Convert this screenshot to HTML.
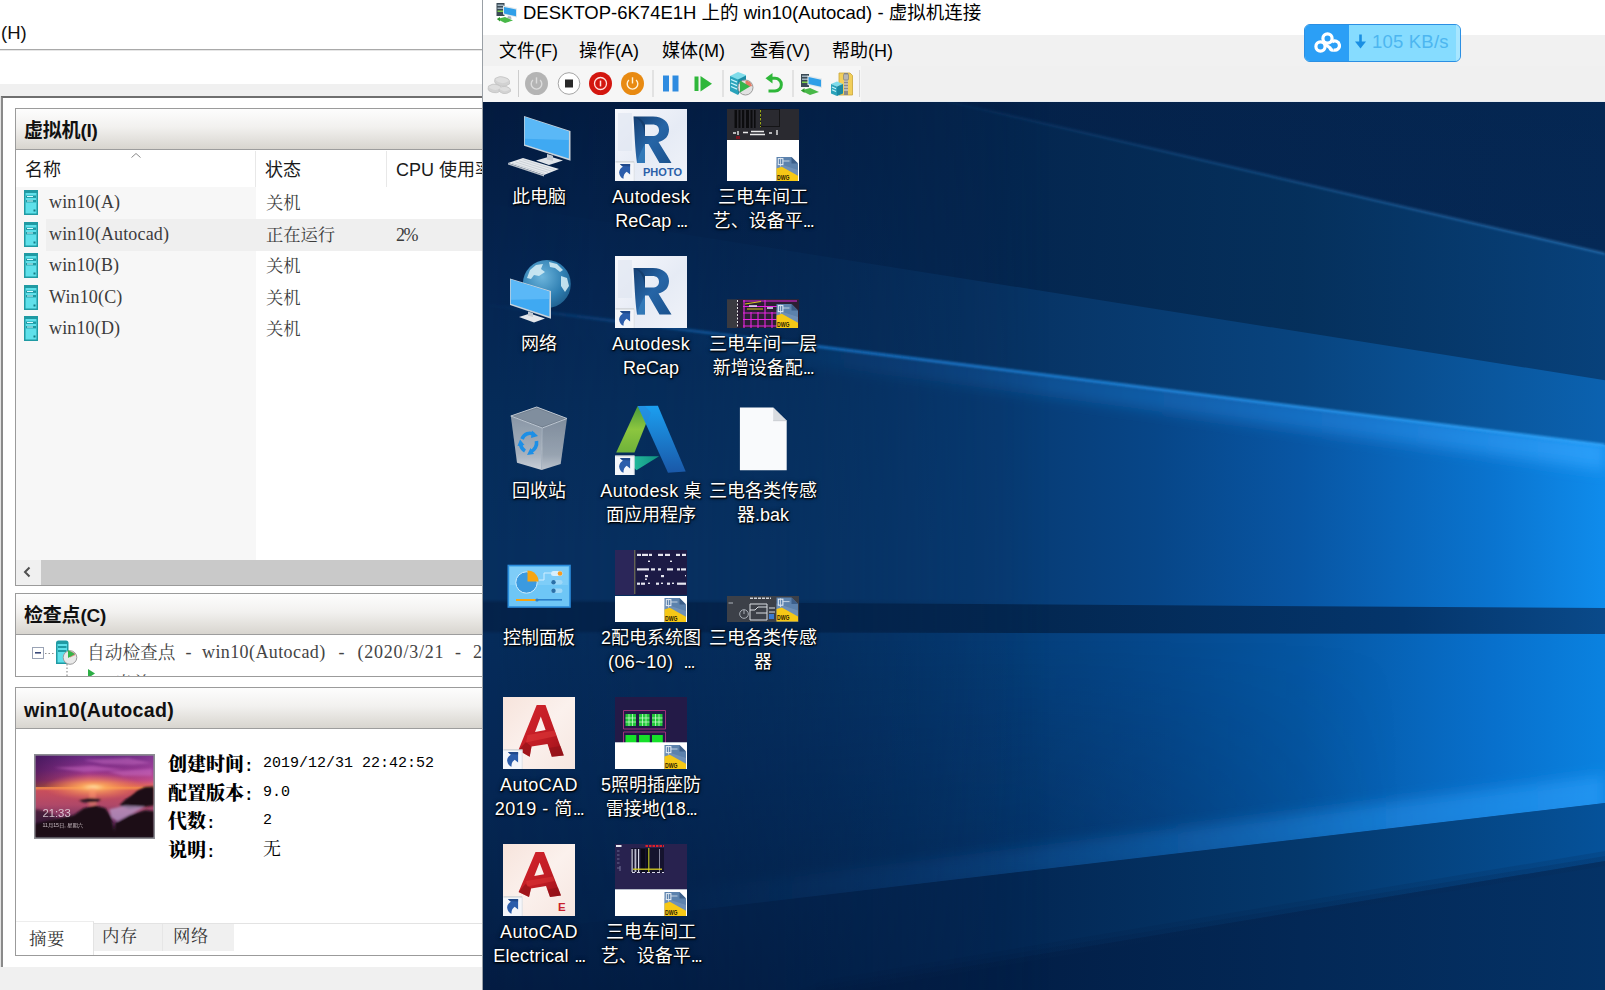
<!DOCTYPE html>
<html lang="zh-CN">
<head>
<meta charset="utf-8">
<title>Hyper-V</title>
<style>
*{box-sizing:border-box;margin:0;padding:0}
html,body{width:1605px;height:990px;overflow:hidden;background:#f0f0f0}
body{position:relative;font-family:"Liberation Sans","Noto Sans CJK SC",sans-serif;color:#000}
.abs{position:absolute}
/* ---------- left: Hyper-V manager ---------- */
#mgr{position:absolute;left:0;top:0;width:483px;height:990px;background:#f0f0f0;overflow:hidden}
#mgr .top1{position:absolute;left:0;top:0;width:483px;height:49px;background:#fff}
#mgr .top1 span{position:absolute;left:1px;top:21px;font-size:18.5px;line-height:24px;color:#111}
#mgr .hr{position:absolute;left:0;top:49px;width:483px;height:1px;background:#a9a9a9}
#mgr .hr2{position:absolute;left:0;top:50px;width:483px;height:1px;background:#e6e6e6}
#mgr .top2{position:absolute;left:0;top:51px;width:483px;height:33px;background:#fff}
#frame{position:absolute;left:0;top:96px;width:490px;height:871px;background:#fff;border-top:2px solid #6f6f6f;border-left:3px solid #8a8a8a;}
#frame:before{content:"";position:absolute;left:-3px;top:-2px;width:1px;height:871px;background:#e3e3e3}
.panel{position:absolute;left:15px;width:480px;border:1px solid #9b9b9b;background:#fff;overflow:hidden}
.phead{position:absolute;left:0;top:0;width:100%;height:41px;background:linear-gradient(#fdfdfd 0%,#f2f1ef 45%,#d8d5cf 100%);border-bottom:1px solid #9d9d9d}
.phead b{position:absolute;left:8px;top:9.5px;font-size:19px;line-height:24px;font-weight:bold;color:#111;letter-spacing:-0.2px}
.sim{font-family:"Liberation Mono","Noto Serif CJK SC",serif}
.colh{position:absolute;top:42px;height:36px;font-size:18px;line-height:24px;color:#1a1a1a}
.colh span{position:absolute;top:7px;white-space:nowrap}
.row{position:absolute;left:0;width:480px;height:32px;font-size:17.3px;line-height:22px;color:#3c3c3c}
.row span{position:absolute;top:4px;white-space:nowrap}
.row .nm{left:33px;font-size:18px;letter-spacing:0.15px;top:4px;font-family:"Liberation Serif","Noto Serif CJK SC",serif}
.row .st{left:250px;font-family:"Noto Serif CJK SC",serif}
.row .cpu{left:380px;font-size:18px;letter-spacing:-1.5px;top:5.5px;font-family:"Liberation Serif","Noto Serif CJK SC",serif}
.vmi{position:absolute;left:8px;top:3px;width:14px;height:25px}
/* ---------- right: VM connection window ---------- */
#vm{position:absolute;left:482px;top:0;width:1123px;height:990px;background:#f0f0f0;border-left:1px solid #9aa0a6;overflow:hidden}
#title{position:absolute;left:0;top:0;width:1122px;height:35px;background:#fff}
#title .t{position:absolute;left:40px;top:0;font-size:18.5px;line-height:26px;white-space:nowrap;color:#000}
#menu{position:absolute;left:0;top:35px;width:1122px;height:31px;background:#f1f1f1;font-size:18px}
#menu span{position:absolute;top:3px;line-height:26px;white-space:nowrap;font-size:18px}
#tb{position:absolute;left:0;top:66px;width:1122px;height:36px;background:#f0f0f0;border-bottom:1px solid #e6ecf2}
#tb .band{position:absolute;left:0;top:0;width:378px;height:36px;background:#f6f6f6}
#tb .sep{position:absolute;top:4px;width:1px;height:27px;background:#c9c9c9}
#desk{position:absolute;left:0;top:102px;width:1122px;height:888px;background:#04204a;overflow:hidden}
.lbl{position:absolute;width:140px;text-align:center;color:#fff;font-size:18px;line-height:24px;white-space:nowrap;text-shadow:0 1px 2px rgba(0,0,0,.95),1px 1px 1px rgba(0,0,0,.8),0 0 4px rgba(0,0,0,.7)}
.lbl .la{letter-spacing:.4px}
.lbl .el{letter-spacing:-1.5px}
</style>
</head>
<body>
<!--LEFT-->
<div id="mgr">
  <div class="top1"><span>(H)</span></div>
  <div class="hr"></div><div class="hr2"></div>
  <div class="top2"></div>
  <div id="frame"></div>
<!--P1-->
<div class="panel" style="top:108px;height:478px">
  <div class="abs" style="left:0;top:78px;width:240px;height:373px;background:#f7f7f7"></div>
  <div class="phead"><b>虚拟机(I)</b></div>
  <div class="colh" style="left:0;width:240px;border-right:1px solid #e8e8e8"><span style="left:9px">名称</span><svg class="abs" style="left:114px;top:1px" width="12" height="7" viewBox="0 0 12 7"><path d="M1.5 5.5 L6 1.5 L10.5 5.5" fill="none" stroke="#8a8a8a" stroke-width="1"/></svg></div>
  <div class="colh" style="left:241px;width:130px;border-right:1px solid #e8e8e8"><span style="left:8px">状态</span></div>
  <div class="colh" style="left:372px;width:120px"><span style="left:8px">CPU 使用率</span></div>
  <div class="row" style="top:78.0px"><svg class="vmi" viewBox="0 0 14 25"><rect x="0" y="0" width="14" height="25" fill="#1f9aa3"/><rect x="1.5" y="3" width="11" height="20.5" fill="#5fe0ea"/><rect x="2" y="5.5" width="10" height="2.4" fill="#1f9aa3"/><rect x="2" y="10" width="10" height="2.4" fill="#1f9aa3"/><rect x="3" y="6" width="6" height="1" fill="#d8fbff"/><rect x="3" y="10.5" width="6" height="1" fill="#d8fbff"/><rect x="9.5" y="19.5" width="2" height="2" fill="#157b84"/></svg><span class="nm sim">win10(A)</span><span class="st">关机</span></div><div class="row" style="top:109.5px"><div class="abs" style="left:30px;top:0;width:460px;height:32px;background:#efefef"></div><svg class="vmi" viewBox="0 0 14 25"><rect x="0" y="0" width="14" height="25" fill="#1f9aa3"/><rect x="1.5" y="3" width="11" height="20.5" fill="#5fe0ea"/><rect x="2" y="5.5" width="10" height="2.4" fill="#1f9aa3"/><rect x="2" y="10" width="10" height="2.4" fill="#1f9aa3"/><rect x="3" y="6" width="6" height="1" fill="#d8fbff"/><rect x="3" y="10.5" width="6" height="1" fill="#d8fbff"/><rect x="9.5" y="19.5" width="2" height="2" fill="#157b84"/></svg><span class="nm sim">win10(Autocad)</span><span class="st">正在运行</span><span class="cpu sim">2%</span></div><div class="row" style="top:141.0px"><svg class="vmi" viewBox="0 0 14 25"><rect x="0" y="0" width="14" height="25" fill="#1f9aa3"/><rect x="1.5" y="3" width="11" height="20.5" fill="#5fe0ea"/><rect x="2" y="5.5" width="10" height="2.4" fill="#1f9aa3"/><rect x="2" y="10" width="10" height="2.4" fill="#1f9aa3"/><rect x="3" y="6" width="6" height="1" fill="#d8fbff"/><rect x="3" y="10.5" width="6" height="1" fill="#d8fbff"/><rect x="9.5" y="19.5" width="2" height="2" fill="#157b84"/></svg><span class="nm sim">win10(B)</span><span class="st">关机</span></div><div class="row" style="top:172.5px"><svg class="vmi" viewBox="0 0 14 25"><rect x="0" y="0" width="14" height="25" fill="#1f9aa3"/><rect x="1.5" y="3" width="11" height="20.5" fill="#5fe0ea"/><rect x="2" y="5.5" width="10" height="2.4" fill="#1f9aa3"/><rect x="2" y="10" width="10" height="2.4" fill="#1f9aa3"/><rect x="3" y="6" width="6" height="1" fill="#d8fbff"/><rect x="3" y="10.5" width="6" height="1" fill="#d8fbff"/><rect x="9.5" y="19.5" width="2" height="2" fill="#157b84"/></svg><span class="nm sim">Win10(C)</span><span class="st">关机</span></div><div class="row" style="top:204.0px"><svg class="vmi" viewBox="0 0 14 25"><rect x="0" y="0" width="14" height="25" fill="#1f9aa3"/><rect x="1.5" y="3" width="11" height="20.5" fill="#5fe0ea"/><rect x="2" y="5.5" width="10" height="2.4" fill="#1f9aa3"/><rect x="2" y="10" width="10" height="2.4" fill="#1f9aa3"/><rect x="3" y="6" width="6" height="1" fill="#d8fbff"/><rect x="3" y="10.5" width="6" height="1" fill="#d8fbff"/><rect x="9.5" y="19.5" width="2" height="2" fill="#157b84"/></svg><span class="nm sim">win10(D)</span><span class="st">关机</span></div>
  <div class="abs" style="left:0;top:451px;width:480px;height:25px;background:#c9c9c9"><div class="abs" style="left:0;top:0;width:25px;height:25px;background:#f0f0f0"><svg class="abs" style="left:7px;top:6px" width="8" height="12" viewBox="0 0 8 12"><path d="M6.5 1.5 L2 6 L6.5 10.5" fill="none" stroke="#505050" stroke-width="2"/></svg></div></div>
</div>
<!--P2-->
<div class="panel" style="top:593px;height:84px">
  <div class="phead"><b>检查点(C)</b></div>
  <svg class="abs" style="left:16px;top:53px" width="26" height="32" viewBox="0 0 26 32"><rect x=".5" y=".5" width="11" height="11" fill="#fff" stroke="#9aa3b5"/><rect x="3" y="5" width="6" height="1.6" fill="#3a4a7a"/><path d="M13 6.5 H23" stroke="#909090" stroke-dasharray="1.5 2" stroke-width="1.2"/></svg>
  <svg class="abs" style="left:39px;top:46px" width="23" height="26" viewBox="0 0 23 26"><path d="M1 3 Q1 0.5 3.5 0.5 L11 0.5 Q13.5 0.5 13.5 3 L13.5 24 L1 24 Z" fill="#1f9aa3"/><rect x="2.5" y="4" width="9.5" height="18.5" fill="#5fe0ea"/><rect x="3" y="6" width="8.5" height="2" fill="#1f9aa3"/><rect x="3" y="10" width="8.5" height="2" fill="#1f9aa3"/><circle cx="15" cy="17.5" r="6.8" fill="#e9e9e9" stroke="#9a9a9a" stroke-width="1"/><path d="M15 17.5 L15 11.5 A6 6 0 0 1 20.5 15 Z" fill="#d64a3a" opacity=".6"/><path d="M13 10 L20 14 L13 18 Z" fill="#35b54a"/></svg>
    <div class="abs" style="left:52px;top:31px;width:2px;height:20px"></div>
  <svg class="abs" style="left:49px;top:70px" width="4" height="14" viewBox="0 0 4 14"><path d="M2 0 V14" stroke="#909090" stroke-dasharray="1.5 2" stroke-width="1.2"/></svg>
  <div class="abs" style="left:0;top:46px;height:24px;width:480px;font-size:18px;line-height:24px;color:#444;white-space:nowrap;font-family:'Liberation Serif','Noto Serif CJK SC',serif"><span class="abs" style="left:71px;font-family:'Noto Serif CJK SC',serif;font-size:17.7px">自动检查点</span><span class="abs" style="left:169.5px">-</span><span class="abs" style="left:186px;letter-spacing:.4px">win10(Autocad)</span><span class="abs" style="left:322.6px">-</span><span class="abs" style="left:341.4px;letter-spacing:.8px">(2020/3/21</span><span class="abs" style="left:439px">-</span><span class="abs" style="left:457px">2</span></div>
  <svg class="abs" style="left:72px;top:75px" width="8" height="10" viewBox="0 0 8 10"><path d="M0 0 L7 4.5 L0 9 Z" fill="#2cae45"/></svg>
  <div class="abs" style="left:99px;top:77px;font-size:17.4px;line-height:22px;color:#444;font-family:'Noto Serif CJK SC',serif;white-space:nowrap">当前</div>
</div>
<!--P3-->
<div class="panel" style="top:687px;height:269px">
  <div class="phead"><b style="font-size:19.6px;letter-spacing:0.3px">win10(Autocad)</b></div>
  <svg class="abs" style="left:18px;top:66px" width="121" height="85" viewBox="0 0 122 86" preserveAspectRatio="none">
<defs><linearGradient id="sk" x1="0" y1="0" x2="0" y2="1"><stop offset="0" stop-color="#6a2a84"/><stop offset=".18" stop-color="#93348e"/><stop offset=".3" stop-color="#c0447a"/><stop offset=".365" stop-color="#e8684a"/><stop offset=".395" stop-color="#f08a4a"/><stop offset=".43" stop-color="#c84e5c"/><stop offset=".6" stop-color="#b04868"/><stop offset=".8" stop-color="#6a3060"/><stop offset="1" stop-color="#2a1428"/></linearGradient>
<linearGradient id="skl" x1="0" y1="0" x2="1" y2="0"><stop offset="0" stop-color="#2a0a40" stop-opacity=".55"/><stop offset=".45" stop-color="#2a0a40" stop-opacity="0"/><stop offset="1" stop-color="#d060c0" stop-opacity=".25"/></linearGradient>
<radialGradient id="sn" cx=".49" cy=".38" r=".42" gradientTransform="translate(0 .24) scale(1 .38)"><stop offset="0" stop-color="#ffe8a8"/><stop offset=".25" stop-color="#ffb060" stop-opacity=".8"/><stop offset="1" stop-color="#ff8050" stop-opacity="0"/></radialGradient>
<filter id="tb2" x="-10%" y="-10%" width="120%" height="120%"><feGaussianBlur stdDeviation="1.1"/></filter>
<clipPath id="tc"><rect x="1.5" y="1.5" width="119" height="83"/></clipPath></defs>
<rect x="0" y="0" width="122" height="86" fill="#8c8c92"/>
<g clip-path="url(#tc)">
<rect x="1.5" y="1.5" width="119" height="83" fill="url(#sk)"/>
<rect x="1.5" y="1.5" width="119" height="32" fill="url(#skl)"/>
<g filter="url(#tb2)"><path d="M50 6 L95 4 L118 9 L100 11 L70 10 Z M20 14 L60 12 L90 16 L50 18 Z M75 18 L119 15 L119 22 L90 22 Z" fill="#d070c8" opacity=".45"/>
<rect x="1.5" y="1.5" width="119" height="83" fill="url(#sn)"/>
<path d="M56 34 L62 34 L63 52 L55 52 Z" fill="#ff9a70" opacity=".45"/>
<path d="M121 33 L112 33.5 L104 37 L98 42 L92 46 L86 52 L96 56 L121 52 Z" fill="#1e1018"/>
<path d="M45 46.5 L56 44.5 L68 45.5 L64 48.5 L50 49 Z" fill="#2a1424"/>
<path d="M76 56 L92 52 L112 53 L100 60 L84 68 L78 64 Z" fill="#b89ac8" opacity=".75"/>
<path d="M1 70 L20 66 L40 62 L50 55 L62 52 L72 55 L78 64 L82 84.5 L1 84.5 Z" fill="#1a0e16"/>
<path d="M82 70 L96 62 L112 57 L121 58 L121 84.5 L80 84.5 Z" fill="#1c1018"/>
<path d="M1 56 L12 58 L24 64 L1 72 Z" fill="#2a1426" opacity=".7"/></g>
<text x="8.5" y="64" font-family="Liberation Sans, sans-serif" font-size="11" fill="#f0e4ea" opacity=".8" textLength="28.5" lengthAdjust="spacingAndGlyphs">21:33</text>
<text x="8.5" y="73.5" font-family="Liberation Sans, Noto Sans CJK SC, sans-serif" font-size="4.6" fill="#f0e4ea" opacity=".8" textLength="41" lengthAdjust="spacingAndGlyphs">11月15日, 星期六</text>
</g></svg>
  <div class="abs" style="left:152px;top:63.0px;font-size:19px;line-height:24px;font-weight:900;font-family:'Noto Serif CJK SC',serif;white-space:nowrap;color:#000">创建时间<span style="font-weight:700;font-family:'Liberation Mono',monospace;font-size:16px">:</span></div><div class="abs" style="left:247px;top:64.0px;font-size:15px;letter-spacing:0px;line-height:24px;font-family:'Liberation Mono','Noto Serif CJK SC',monospace;white-space:nowrap;color:#000">2019/12/31 22:42:52</div>
  <div class="abs" style="left:152px;top:91.7px;font-size:19px;line-height:24px;font-weight:900;font-family:'Noto Serif CJK SC',serif;white-space:nowrap;color:#000">配置版本<span style="font-weight:700;font-family:'Liberation Mono',monospace;font-size:16px">:</span></div><div class="abs" style="left:247px;top:92.7px;font-size:15px;letter-spacing:0px;line-height:24px;font-family:'Liberation Mono','Noto Serif CJK SC',monospace;white-space:nowrap;color:#000">9.0</div>
  <div class="abs" style="left:152px;top:120.4px;font-size:19px;line-height:24px;font-weight:900;font-family:'Noto Serif CJK SC',serif;white-space:nowrap;color:#000">代数<span style="font-weight:700;font-family:'Liberation Mono',monospace;font-size:16px">:</span></div><div class="abs" style="left:247px;top:121.4px;font-size:15px;letter-spacing:0px;line-height:24px;font-family:'Liberation Mono','Noto Serif CJK SC',monospace;white-space:nowrap;color:#000">2</div>
  <div class="abs" style="left:152px;top:149.1px;font-size:19px;line-height:24px;font-weight:900;font-family:'Noto Serif CJK SC',serif;white-space:nowrap;color:#000">说明<span style="font-weight:700;font-family:'Liberation Mono',monospace;font-size:16px">:</span></div><div class="abs" style="left:247px;top:150.1px;font-size:15px;letter-spacing:0px;line-height:24px;font-family:'Liberation Mono','Noto Serif CJK SC',monospace;white-space:nowrap;color:#000"><span style="font-size:18px">无</span></div>
  <div class="abs" style="left:0;top:235px;width:480px;height:1px;background:#e3e3e3"></div>
  <div class="abs" style="left:78px;top:236px;width:140px;height:27px;background:#f0f0f0"></div>
  <div class="abs" style="left:146px;top:236px;width:1px;height:27px;background:#e6e6e6"></div>
  <div class="abs" style="left:0;top:233px;width:78px;height:34px;background:#fff;border-right:1px solid #e3e3e3;border-top:1px solid #ededed"></div>
  <div class="abs" style="left:13px;top:239px;font-size:17.4px;line-height:22px;color:#333;font-family:'Noto Serif CJK SC',serif;letter-spacing:0.5px">摘要</div>
  <div class="abs" style="left:86px;top:236px;font-size:17.4px;line-height:22px;color:#333;font-family:'Noto Serif CJK SC',serif;letter-spacing:0.5px">内存</div>
  <div class="abs" style="left:157px;top:236px;font-size:17.4px;line-height:22px;color:#333;font-family:'Noto Serif CJK SC',serif;letter-spacing:0.5px">网络</div>
</div>
<!--/P-->
</div>
<!--RIGHT-->
<div id="vm">
  <div id="title"><svg class="abs" style="left:13px;top:2px" width="22" height="22" viewBox="0 0 22 22">
<rect x="0.5" y="1" width="8" height="13" fill="#3a4a55"/><rect x="1.5" y="2.5" width="6" height="1.5" fill="#9fb3c0"/><rect x="1.5" y="5.5" width="6" height="1.5" fill="#9fb3c0"/><rect x="1.5" y="8.5" width="6" height="1.5" fill="#7fd24a"/>
<path d="M7 3.5 L21 6.5 L21 15.5 L7 12.5 Z" fill="#dfe7ec"/><path d="M8 5 L20 7.6 L20 14.2 L8 11.6 Z" fill="#2f9fe8"/>
<path d="M12 14 L15 14.6 L15.5 17 L11 16.5 Z" fill="#aab4ba"/>
<path d="M1 17 L9 15 L17 18.5 L9 21 Z" fill="#48b848"/><path d="M1 17 L4 15 L4 19.5 Z" fill="#2e9a2e"/>
</svg><div class="t">DESKTOP-6K74E1H 上的 win10(Autocad) - 虚拟机连接</div></div>
  <div id="menu"><span style="left:16px">文件(F)</span><span style="left:96px">操作(A)</span><span style="left:179px">媒体(M)</span><span style="left:267px">查看(V)</span><span style="left:349px">帮助(H)</span></div>
  <div id="tb"><div class="band"></div><svg class="abs" style="left:0;top:0" width="380" height="36" viewBox="0 0 380 36">
<defs><linearGradient id="tg1" x1="0" y1="0" x2="0" y2="1"><stop offset="0" stop-color="#b9edf5"/><stop offset="1" stop-color="#3bb6cc"/></linearGradient></defs>
<!-- ctrl-alt-del (disabled keys) -->
<g fill="#d2d2d2" stroke="#c2c2c2" stroke-width=".7"><path d="M12 12.5 Q16.5 9.5 20.5 11 Q26.5 12.5 26.5 15 L26.5 18 Q22 21.5 17.5 20 Q11.5 18 11.5 15.5 Z"/><path d="M5.5 20 Q10 17 14 18.5 Q18.5 20 18.5 22 L18.5 24.5 Q14 28 9.5 26.5 Q5 25 5 23 Z"/><path d="M16 22 Q20 19.5 23.5 20.5 Q27.5 22 27.5 23.5 L27.5 25.5 Q23.5 28.5 20 27.5 Q16 26 16 24.5 Z"/></g><g fill="#dedede"><path d="M12.5 13 Q16.5 10.3 20.3 11.7 Q25.8 13.2 25.8 15 Q21.5 18 17.7 16.8 Q12.3 15.2 12.5 13 Z"/><path d="M6 20.5 Q10 17.8 13.8 19.2 Q17.8 20.5 17.8 22 Q13.8 24.8 9.8 23.5 Q6 22.3 6 20.5 Z"/><path d="M16.6 22.4 Q20 20.3 23.3 21.2 Q26.8 22.4 26.8 23.6 Q23.5 25.9 20.2 25 Q16.6 23.8 16.6 22.4 Z"/></g>
<rect x="35" y="4" width="1" height="27" fill="#cdcdcd"/>
<!-- start (disabled) -->
<circle cx="53.5" cy="17.5" r="11.5" fill="#b4b4b4"/><path d="M49.9 13.9 A5.3 5.3 0 1 0 57.1 13.9" fill="none" stroke="#dcdcdc" stroke-width="1.4"/><path d="M53.5 11.3 V17.5" stroke="#dcdcdc" stroke-width="1.4"/>
<!-- turn off (stop) -->
<circle cx="86" cy="17.5" r="10.8" fill="#fff" stroke="#9a9a9a" stroke-width=".9"/><rect x="82" y="13.5" width="8" height="8" fill="#2a2a2a"/>
<!-- shut down red -->
<circle cx="117.5" cy="17.5" r="11.5" fill="#d3160f"/><circle cx="117.5" cy="17.5" r="6" fill="none" stroke="#ffe2e0" stroke-width="1.3"/><path d="M117.5 14.6 V20.4" stroke="#ffe2e0" stroke-width="1.5"/>
<!-- save orange -->
<circle cx="149.5" cy="17.5" r="11.5" fill="#e88a12"/><path d="M145.9 13.9 A5.3 5.3 0 1 0 153.1 13.9" fill="none" stroke="#fff3d8" stroke-width="1.4"/><path d="M149.5 11.3 V17.5" stroke="#fff3d8" stroke-width="1.4"/>
<rect x="169.5" y="4" width="1" height="27" fill="#cdcdcd"/>
<!-- pause -->
<rect x="180" y="9.5" width="6" height="16" fill="#2e8be0"/><rect x="189.5" y="9.5" width="6" height="16" fill="#2e8be0"/>
<!-- reset/step -->
<rect x="211.5" y="10.5" width="4" height="14.5" fill="#2fb73a"/><path d="M217.5 10 L229 17.7 L217.5 25.5 Z" fill="#2fb73a"/>
<rect x="239.5" y="4" width="1" height="27" fill="#cdcdcd"/>
<!-- checkpoint -->
<path d="M247 10 L255 6 L263 9 L263 14 L255 18 Z" fill="#7fdcea"/><path d="M247 10 L255 13.5 L255 29 L247 25 Z" fill="#2aa3bb"/><path d="M255 13.5 L263 9.5 L263 17 L255 29 Z" fill="#1b8aa3"/>
<path d="M248 13.5 L254 16.2 M248 17 L254 19.7 M248 20.5 L254 23.2" stroke="#c9f4fa" stroke-width="1.3"/>
<circle cx="262.5" cy="21.5" r="7.5" fill="#e2e2e2" stroke="#9c9c9c" stroke-width="1"/><path d="M262.5 21.5 L262.5 14.8 A6.7 6.7 0 0 1 269 20 Z" fill="#e0583a" opacity=".75"/><path d="M257 14.5 L267 20.5 L257 26.5 Z" fill="#35b54a"/>
<!-- revert -->
<path d="M287 12.3 L292 12.3 A6.3 6.3 0 0 1 292 25 L285.5 25" fill="none" stroke="#2fb73a" stroke-width="3"/><path d="M282.5 12.3 L289.5 7 L289.5 17.6 Z" fill="#2fb73a"/>
<rect x="309.5" y="4" width="1" height="27" fill="#cdcdcd"/>
<!-- enhanced session -->
<rect x="318" y="8" width="8" height="13" fill="#3a4a55"/><rect x="319" y="9.5" width="6" height="1.5" fill="#9fb3c0"/><rect x="319" y="12.5" width="6" height="1.5" fill="#9fb3c0"/><rect x="319" y="15.5" width="6" height="1.5" fill="#7fd24a"/>
<path d="M324.5 9.5 L339 12.5 L339 22 L324.5 19 Z" fill="#dfe7ec"/><path d="M325.5 11 L338 13.7 L338 20.7 L325.5 18 Z" fill="#2f9fe8"/>
<path d="M318 24.5 L327 22 L336 26 L327 29 Z" fill="#48b848"/><path d="M318 24.5 L321.5 22 L321.5 27 Z" fill="#2e9a2e"/>
<!-- share / zip -->
<path d="M356 7 L367 7 L369.5 9.5 L369.5 29 L356 29 Z" fill="#f2cf5a" stroke="#c9a63a" stroke-width=".8"/><rect x="361" y="7" width="4" height="22" fill="#8a8a8a"/><path d="M361 9 H365 M361 12 H365 M361 15 H365 M361 18 H365 M361 21 H365 M361 24 H365" stroke="#e8e8e8" stroke-width="1"/><rect x="360.5" y="8" width="5" height="6" rx="1" fill="#b5b5b5" stroke="#777" stroke-width=".6"/>
<path d="M348 18 L354 15.5 L360 18 L354 20.5 Z" fill="#7fdcea"/><path d="M348 18 L354 20.5 L354 30 L348 27.5 Z" fill="#2aa3bb"/><path d="M354 20.5 L360 18 L360 27.5 L354 30 Z" fill="#1b8aa3"/>
<path d="M349 21 L353 22.7 M349 23.8 L353 25.5" stroke="#c9f4fa" stroke-width="1.1"/>
<rect x="376" y="4" width="1" height="27" fill="#d5d5d5"/>
</svg></div>
  <div class="abs" style="left:821px;top:24px;width:157px;height:38px;border:1.5px solid #2b8fe3;border-radius:6px;background:#86dcff;overflow:hidden">
<div class="abs" style="left:0;top:0;width:44px;height:38px;background:#2b9ff6"></div>
<div class="abs" style="right:0;top:0;width:4px;height:38px;background:#a8e6ff"></div>
<svg class="abs" style="left:8px;top:6px" width="30" height="24" viewBox="0 0 30 24"><g fill="none" stroke="#fff" stroke-width="3.2"><circle cx="14.5" cy="7.5" r="4.6"/><circle cx="7.5" cy="15.5" r="4.6"/><path d="M11 12.5 L18 17.5"/><path d="M20.5 19 A4.6 4.6 0 1 0 19 11"/><path d="M20.5 19 Q17.5 19.5 17 17"/></g></svg>
<svg class="abs" style="left:49px;top:9px" width="13" height="16" viewBox="0 0 13 16"><path d="M6.5 0.5 V10" stroke="#1a8fe3" stroke-width="2.6"/><path d="M1 7.5 L6.5 14.5 L12 7.5 Z" fill="#1a8fe3"/></svg>
<div class="abs" style="left:67px;top:5px;font-size:18.5px;line-height:24px;color:#4db6f0;white-space:nowrap;letter-spacing:0.2px">105 KB/s</div>
</div>
<div id="desk">
<!--WALL-->
<svg class="abs" style="left:0;top:-1px" width="1122" height="889" viewBox="483 101 1122 889" preserveAspectRatio="none">
<defs>
<linearGradient id="g0" gradientUnits="userSpaceOnUse" x1="483" y1="0" x2="1605" y2="0"><stop offset="0" stop-color="#05214a"/><stop offset=".4" stop-color="#04234c"/><stop offset="1" stop-color="#052a58"/></linearGradient>
<linearGradient id="g0v" gradientUnits="userSpaceOnUse" x1="0" y1="101" x2="0" y2="330"><stop offset="0" stop-color="#01102b" stop-opacity=".12"/><stop offset="1" stop-color="#01102b" stop-opacity="0"/></linearGradient>
<linearGradient id="ga" gradientUnits="userSpaceOnUse" x1="483" y1="0" x2="1605" y2="0"><stop offset="0" stop-color="#05214a"/><stop offset=".46" stop-color="#04264f"/><stop offset=".73" stop-color="#05315d"/><stop offset="1" stop-color="#08447f"/></linearGradient>
<linearGradient id="gb" gradientUnits="userSpaceOnUse" x1="483" y1="0" x2="1605" y2="0"><stop offset="0" stop-color="#052652"/><stop offset="0.3" stop-color="#062c58"/><stop offset="0.46" stop-color="#073262"/><stop offset="0.73" stop-color="#08447f"/><stop offset="1" stop-color="#0b62b0"/></linearGradient>
<linearGradient id="gc" gradientUnits="userSpaceOnUse" x1="483" y1="0" x2="1605" y2="0"><stop offset="0" stop-color="#072c59"/><stop offset="0.3" stop-color="#073466"/><stop offset="0.46" stop-color="#073a72"/><stop offset="0.6" stop-color="#074688"/><stop offset="0.73" stop-color="#0856a4"/><stop offset="0.9" stop-color="#0a74cf"/><stop offset="1" stop-color="#0f8cec"/></linearGradient>
<linearGradient id="gbar" gradientUnits="userSpaceOnUse" x1="483" y1="0" x2="1605" y2="0"><stop offset="0" stop-color="#031f47"/><stop offset="0.46" stop-color="#03264f"/><stop offset="0.82" stop-color="#04356b"/><stop offset="1" stop-color="#0a4a8a"/></linearGradient>
<linearGradient id="gd" gradientUnits="userSpaceOnUse" x1="483" y1="0" x2="1605" y2="0"><stop offset="0" stop-color="#05264f"/><stop offset="0.18" stop-color="#052c5a"/><stop offset="0.3" stop-color="#053264"/><stop offset="0.46" stop-color="#053c76"/><stop offset="0.6" stop-color="#05488c"/><stop offset="0.73" stop-color="#0556a2"/><stop offset="0.9" stop-color="#0870cc"/><stop offset="1" stop-color="#0a82e0"/></linearGradient>
<linearGradient id="ge" gradientUnits="userSpaceOnUse" x1="483" y1="0" x2="1605" y2="0"><stop offset="0" stop-color="#031c42"/><stop offset="0.46" stop-color="#032652"/><stop offset="0.73" stop-color="#04386c"/><stop offset="1" stop-color="#05529a"/></linearGradient>
<linearGradient id="gf" gradientUnits="userSpaceOnUse" x1="483" y1="0" x2="1605" y2="0"><stop offset="0" stop-color="#02183a"/><stop offset="0.46" stop-color="#021e46"/><stop offset="1" stop-color="#043266"/></linearGradient>
<linearGradient id="lc" gradientUnits="userSpaceOnUse" x1="483" y1="0" x2="1605" y2="0"><stop offset="0" stop-color="#1a6fc0" stop-opacity="0"/><stop offset=".3" stop-color="#1a74c8" stop-opacity=".8"/><stop offset="1" stop-color="#2ea2f8"/></linearGradient>
<linearGradient id="la" gradientUnits="userSpaceOnUse" x1="900" y1="0" x2="1605" y2="0"><stop offset="0" stop-color="#2a78c0" stop-opacity="0"/><stop offset=".4" stop-color="#2a78c0" stop-opacity=".3"/><stop offset="1" stop-color="#3a8ad0" stop-opacity=".55"/></linearGradient>
<linearGradient id="dk" gradientUnits="userSpaceOnUse" x1="0" y1="0" x2="0" y2="1"><stop offset="0" stop-color="#000"/><stop offset="1" stop-color="#000"/></linearGradient>
<linearGradient id="lv" gradientUnits="userSpaceOnUse" x1="0" y1="101" x2="0" y2="990"><stop offset="0" stop-color="#031a3e"/><stop offset="0.11" stop-color="#042048"/><stop offset="0.22" stop-color="#052551"/><stop offset="0.34" stop-color="#062b58"/><stop offset="0.5" stop-color="#072f5f"/><stop offset="0.56" stop-color="#072f5f"/><stop offset="0.565" stop-color="#04234b"/><stop offset="0.595" stop-color="#04234b"/><stop offset="0.6" stop-color="#062c5b"/><stop offset="0.75" stop-color="#052856"/><stop offset="0.9" stop-color="#04224b"/><stop offset="1" stop-color="#031c42"/></linearGradient>
<linearGradient id="lm" gradientUnits="userSpaceOnUse" x1="483" y1="0" x2="1050" y2="0"><stop offset="0" stop-color="#fff" stop-opacity=".92"/><stop offset=".35" stop-color="#fff" stop-opacity=".7"/><stop offset="1" stop-color="#fff" stop-opacity="0"/></linearGradient>
<mask id="mk" maskUnits="userSpaceOnUse" x="483" y="101" width="1122" height="889"><rect x="483" y="101" width="600" height="889" fill="url(#lm)"/></mask>
<linearGradient id="glc" gradientUnits="userSpaceOnUse" x1="483" y1="0" x2="1605" y2="0"><stop offset="0" stop-color="#1c7fd8" stop-opacity="0"/><stop offset=".4" stop-color="#1c7fd8" stop-opacity=".2"/><stop offset=".8" stop-color="#2a94f0" stop-opacity=".5"/><stop offset="1" stop-color="#35a6ff" stop-opacity=".75"/></linearGradient>
<linearGradient id="gle" gradientUnits="userSpaceOnUse" x1="483" y1="0" x2="1605" y2="0"><stop offset="0" stop-color="#1c7fd8" stop-opacity="0"/><stop offset=".45" stop-color="#1878d0" stop-opacity=".35"/><stop offset="1" stop-color="#2a9cf8" stop-opacity=".7"/></linearGradient>
<linearGradient id="gdv" gradientUnits="userSpaceOnUse" x1="0" y1="640" x2="0" y2="930"><stop offset="0" stop-color="#021a40" stop-opacity="0"/><stop offset="1" stop-color="#021a40" stop-opacity=".5"/></linearGradient><linearGradient id="gdm" gradientUnits="userSpaceOnUse" x1="483" y1="0" x2="1400" y2="0"><stop offset="0" stop-color="#fff"/><stop offset=".6" stop-color="#fff" stop-opacity=".8"/><stop offset="1" stop-color="#fff" stop-opacity="0"/></linearGradient><mask id="mk2" maskUnits="userSpaceOnUse" x="483" y="101" width="1122" height="889"><rect x="483" y="600" width="920" height="400" fill="url(#gdm)"/></mask>
<filter id="b1" x="-5%" y="-50%" width="110%" height="200%"><feGaussianBlur stdDeviation="1.2"/></filter>
<filter id="b3" x="-5%" y="-20%" width="110%" height="140%"><feGaussianBlur stdDeviation="3"/></filter><filter id="b6" x="-5%" y="-50%" width="110%" height="200%"><feGaussianBlur stdDeviation="7"/></filter>
</defs>
<rect x="483" y="101" width="1122" height="889" fill="url(#g0)"/>
<rect x="483" y="101" width="1122" height="230" fill="url(#g0v)"/>
<polygon points="947,101 1605,253.6 1605,381 483,203 483,101" fill="url(#ga)" opacity=".9"/>
<polygon points="483,202.4 1605,380.2 1605,446 483,305" fill="url(#gb)"/>
<polygon points="483,304.4 1605,445.2 1605,609 483,602" fill="url(#gc)"/>
<polygon points="483,601 1605,608 1605,634 483,632" fill="url(#gbar)"/>
<polygon points="483,632 1605,634 1605,803 483,935" fill="url(#gd)"/>
<polygon points="483,935 1605,803 1605,861 1000,961 824,990 483,990" fill="url(#ge)"/>
<polygon points="700,1030 824,980 1000,951 1605,851 1700,835 1700,1030" fill="url(#gf)" opacity="0.25"/><polygon points="700,1030 824,985 1000,956 1605,856 1700,840 1700,1030" fill="url(#gf)" opacity="0.33"/><polygon points="700,1030 824,990 1000,961 1605,861 1700,845 1700,1030" fill="url(#gf)" opacity="0.5"/><polygon points="700,1030 824,995 1000,966 1605,866 1700,850 1700,1030" fill="url(#gf)" opacity="1"/>
<clipPath id="cc"><polygon points="483,304.4 1605,445.2 1605,609 483,602"/></clipPath>
<g clip-path="url(#cc)"><polygon points="483,300 1605,441 1605,470 483,322" fill="url(#glc)" filter="url(#b6)"/></g>
<clipPath id="ce"><polygon points="483,632 1605,634 1605,803 483,935"/></clipPath>
<g clip-path="url(#ce)"><polygon points="483,915 1605,775 1605,812 483,945" fill="url(#gle)" filter="url(#b6)"/></g>
<g clip-path="url(#ce)"><rect x="483" y="634" width="920" height="310" fill="url(#gdv)" mask="url(#mk2)"/></g>
<rect x="483" y="101" width="600" height="889" fill="url(#lv)" mask="url(#mk)"/>
<line x1="947" y1="101" x2="1605" y2="253.6" stroke="url(#la)" stroke-width="2.5" filter="url(#b1)"/>
<line x1="483" y1="304.4" x2="1605" y2="445.2" stroke="url(#lc)" stroke-width="3" filter="url(#b1)"/>
</svg>
<!--/WALL-->
<!--ICONS-->
<svg class="abs" style="left:20px;top:7px" width="72" height="72" viewBox="0 0 72 72"><polygon points="21,7 67.5,22 67.5,51.8 21,36.7" fill="#c9d3dc"/><polygon points="21.8,8.1 65.9,22.6 65.9,49.599999999999994 21.8,35.400000000000006" fill="#3fa9f2"/><polygon points="21.8,8.1 65.9,22.6 65.9,30.9 21.8,29.85" fill="#6cc3fa" opacity=".6"/><polygon points="33,51.5 47,47.5 60,51.5 46,56" fill="#dfe3e8"/><polygon points="44,45 50,46.8 50,52 44,50.5" fill="#c4cad2"/><polygon points="5,54 20,49 56,60 41,66" fill="#e6e9ed"/><polygon points="5,54 41,66 41,67.5 5,55.5" fill="#b9c0c8"/><path d="M9 54.2 L41.5 64.5 M12.5 53 L45 63.3 M16 51.8 L48.5 62.1 M19.5 50.6 L52 60.9" stroke="#c2c8cf" stroke-width=".7"/></svg>
<div class="lbl" style="left:-14px;top:83px">此电脑</div>
<svg class="abs" style="left:132px;top:7px" width="72" height="72" viewBox="0 0 72 72"><defs><linearGradient id="rcbg1" x1="0" y1="0" x2="1" y2="1"><stop offset="0" stop-color="#f7f8fc"/><stop offset=".55" stop-color="#e6ebf5"/><stop offset="1" stop-color="#f0f3f9"/></linearGradient><linearGradient id="rcr1" x1="0" y1="0" x2="1" y2="1"><stop offset="0" stop-color="#153f72"/><stop offset=".5" stop-color="#2665a6"/><stop offset="1" stop-color="#1b528e"/></linearGradient></defs><rect x="0" y="0" width="72" height="72" fill="url(#rcbg1)"/><rect x="3" y="4" width="14" height="38" fill="#dde4f0" opacity=".6"/><g transform="translate(0,0)"><path fill-rule="evenodd" d="M18.5 7.5 H38 C48 7.5 54 13 54 20.5 C54 27 50 31.5 43.5 33 L56.5 54 H44.5 L33.5 35 H30 V54 H22 C20 40 19.5 22 18.5 7.5 Z M30 15.5 V27 H37.5 C41.5 27 44 24.8 44 21.2 C44 17.6 41.5 15.5 37.5 15.5 Z" fill="url(#rcr1)"/><path d="M18.5 7.5 C24 10 29 14 30 27 V15.5 C28 11 24 8.5 18.5 7.5 Z" fill="#123a68" opacity=".8"/><path d="M30 35 L30 54 L22 54 C24 46 27 40 30 35 Z" fill="#3c8ac8" opacity=".55"/></g><text x="28" y="66.6" font-family="Liberation Sans, sans-serif" font-weight="bold" font-size="10.6" fill="#2b5fa8" textLength="39" lengthAdjust="spacingAndGlyphs">PHOTO</text><g transform="translate(0,52.5)"><rect x="0" y="0" width="19.5" height="19.5" fill="#f4f6fa"/><path d="M0.5 0.4 H19" stroke="#b9bcc2" stroke-width=".8"/><path d="M19.2 0 V19.5" stroke="#cfd3da" stroke-width=".6"/><path d="M4.9 2.6 L15.1 2.6 L15.1 12.9 L11.7 10.2 C9.5 11.8 8.3 13.7 8.5 17.3 C6 16.5 4.5 14 4.1 11 C4.3 8.5 5.8 6.5 7.8 5.3 Z" fill="#2b5dab"/><path d="M4.9 2.6 L15.1 2.6 L15.1 5 L7 4.6 Z" fill="#1d427e" opacity=".7"/></g></svg>
<div class="lbl" style="left:98px;top:83px"><span class="la">Autodesk</span><br>ReCap <span class="el">...</span></div>
<svg class="abs" style="left:244px;top:7px" width="72" height="72" viewBox="0 0 72 72"><rect x="0" y="0" width="72" height="31" fill="#2a2a30"/><g fill="#0c0c0e"><rect x="7.5" y="1" width="2.5" height="18"/><rect x="11.5" y="1" width="2" height="18"/><rect x="15" y="1" width="2.2" height="18"/><rect x="19" y="1" width="3" height="18"/><rect x="23.5" y="1" width="2" height="18"/><rect x="27" y="1" width="1.6" height="18"/></g><rect x="33.5" y="0.5" width="19" height="17" fill="none" stroke="#141416" stroke-width="1"/><path d="M33.5 1 V18" stroke="#9aa818" stroke-width="1" stroke-dasharray="2.5 1.5"/><path d="M6 24 H9 M11 22 V26 M16 23.5 H21 M23 25.5 H38 M24 22.5 H37 M42 24 H45 M50 21 V26" stroke="#e9e9e9" stroke-width="1.4"/><rect x="9" y="27" width="4" height="3" fill="#7a1520"/><rect x="0" y="31" width="72" height="41" fill="#fff"/><g transform="translate(49.5,48)"><path d="M0 0 H15 L21.5 6.5 V24 H0 Z" fill="#5c82ad"/><path d="M15 0 L21.5 6.5 H15 Z" fill="#3c5f8a"/><path d="M0 6 L21.5 13 V19 L0 11.5 Z" fill="#7f9dc0" opacity=".55"/><rect x="1.8" y="1.6" width="4.6" height="6" fill="none" stroke="#e8eef5" stroke-width="1"/><path d="M4 0.8 V9.5 M6.4 4 H13" stroke="#dbe4ee" stroke-width=".8"/><path d="M0 11.5 L5.3 9.8 L21.5 18.8 V24 H0 Z" fill="#f6c816"/><text x="0.6" y="22.6" font-family="Liberation Sans, sans-serif" font-weight="bold" font-size="6.6" fill="#2e2200" textLength="12.5" lengthAdjust="spacingAndGlyphs">DWG</text></g></svg>
<div class="lbl" style="left:210px;top:83px">三电车间工<br>艺、设备平<span class="el">...</span></div>
<svg class="abs" style="left:20px;top:154px" width="72" height="72" viewBox="0 0 72 72"><defs><radialGradient id="glb" cx=".4" cy=".35" r=".75"><stop offset="0" stop-color="#6db5dc"/><stop offset=".6" stop-color="#2f7fb2"/><stop offset="1" stop-color="#1d5a88"/></radialGradient></defs><circle cx="43.8" cy="28" r="24" fill="url(#glb)"/><path d="M27 14 L33 9 L40 8 L38 13 L42 16 L36 20 L31 19 L28 23 L24 22 Z M46 6 L54 8 L60 14 L57 16 L52 12 L47 11 Z M58 20 L64 22 L66 30 L62 36 L58 30 Z" fill="#d2ebf4" opacity=".9"/><polygon points="7,22.4 48,35 48,62.8 7,49" fill="#c9d3dc"/><polygon points="7.8,23.5 46.4,35.6 46.4,60.599999999999994 7.8,47.7" fill="#3fa9f2"/><polygon points="7.8,23.5 46.4,35.6 46.4,42.9 7.8,43.7" fill="#6cc3fa" opacity=".6"/><polygon points="16,61 27,57.5 42,62.5 31,66.5" fill="#e4e7eb"/><polygon points="25,55.5 30,57 30,61 25,59.8" fill="#c4cad2"/></svg>
<div class="lbl" style="left:-14px;top:230px">网络</div>
<svg class="abs" style="left:132px;top:154px" width="72" height="72" viewBox="0 0 72 72"><defs><linearGradient id="rcbg0" x1="0" y1="0" x2="1" y2="1"><stop offset="0" stop-color="#f7f8fc"/><stop offset=".55" stop-color="#e6ebf5"/><stop offset="1" stop-color="#f0f3f9"/></linearGradient><linearGradient id="rcr0" x1="0" y1="0" x2="1" y2="1"><stop offset="0" stop-color="#153f72"/><stop offset=".5" stop-color="#2665a6"/><stop offset="1" stop-color="#1b528e"/></linearGradient></defs><rect x="0" y="0" width="72" height="72" fill="url(#rcbg0)"/><rect x="3" y="4" width="14" height="38" fill="#dde4f0" opacity=".6"/><g transform="translate(0,4.5)"><path fill-rule="evenodd" d="M18.5 7.5 H38 C48 7.5 54 13 54 20.5 C54 27 50 31.5 43.5 33 L56.5 54 H44.5 L33.5 35 H30 V54 H22 C20 40 19.5 22 18.5 7.5 Z M30 15.5 V27 H37.5 C41.5 27 44 24.8 44 21.2 C44 17.6 41.5 15.5 37.5 15.5 Z" fill="url(#rcr0)"/><path d="M18.5 7.5 C24 10 29 14 30 27 V15.5 C28 11 24 8.5 18.5 7.5 Z" fill="#123a68" opacity=".8"/><path d="M30 35 L30 54 L22 54 C24 46 27 40 30 35 Z" fill="#3c8ac8" opacity=".55"/></g><g transform="translate(0,52.5)"><rect x="0" y="0" width="19.5" height="19.5" fill="#f4f6fa"/><path d="M0.5 0.4 H19" stroke="#b9bcc2" stroke-width=".8"/><path d="M19.2 0 V19.5" stroke="#cfd3da" stroke-width=".6"/><path d="M4.9 2.6 L15.1 2.6 L15.1 12.9 L11.7 10.2 C9.5 11.8 8.3 13.7 8.5 17.3 C6 16.5 4.5 14 4.1 11 C4.3 8.5 5.8 6.5 7.8 5.3 Z" fill="#2b5dab"/><path d="M4.9 2.6 L15.1 2.6 L15.1 5 L7 4.6 Z" fill="#1d427e" opacity=".7"/></g></svg>
<div class="lbl" style="left:98px;top:230px"><span class="la">Autodesk</span><br>ReCap</div>
<svg class="abs" style="left:244px;top:154px" width="72" height="72" viewBox="0 0 72 72"><rect x="0" y="43.3" width="72" height="28.7" fill="#3a3a40"/><rect x="10" y="43.3" width="62" height="28.7" fill="#2b1f33"/><path d="M10.5 44 V72" stroke="#e8e8e8" stroke-width="1" stroke-dasharray="2 1.5"/><path d="M16 45 H70 M16 50.5 H50 M16 57 H50 M16 63.5 H50 M16 70 H50 M17 44 V72 M24 56 V72 M31 56 V72 M38 44 V72 M45 56 V72" stroke="#e626e0" stroke-width="1.1"/><path d="M18 48 L34 45.5 M20 53 H36" stroke="#d8c820" stroke-width="1"/><path d="M22 50 H30 M40 52 H46" stroke="#e8e8ff" stroke-width="1.3"/><g transform="translate(49.5,48)"><path d="M0 0 H15 L21.5 6.5 V24 H0 Z" fill="#5c82ad"/><path d="M15 0 L21.5 6.5 H15 Z" fill="#3c5f8a"/><path d="M0 6 L21.5 13 V19 L0 11.5 Z" fill="#7f9dc0" opacity=".55"/><rect x="1.8" y="1.6" width="4.6" height="6" fill="none" stroke="#e8eef5" stroke-width="1"/><path d="M4 0.8 V9.5 M6.4 4 H13" stroke="#dbe4ee" stroke-width=".8"/><path d="M0 11.5 L5.3 9.8 L21.5 18.8 V24 H0 Z" fill="#f6c816"/><text x="0.6" y="22.6" font-family="Liberation Sans, sans-serif" font-weight="bold" font-size="6.6" fill="#2e2200" textLength="12.5" lengthAdjust="spacingAndGlyphs">DWG</text></g></svg>
<div class="lbl" style="left:210px;top:230px">三电车间一层<br>新增设备配<span class="el">...</span></div>
<svg class="abs" style="left:20px;top:301px" width="72" height="72" viewBox="0 0 72 72"><defs><linearGradient id="bn1" x1="0" y1="0" x2="0" y2="1"><stop offset="0" stop-color="#97a2ae"/><stop offset=".7" stop-color="#b9c0c9"/><stop offset="1" stop-color="#dfe2e6"/></linearGradient><linearGradient id="bn2" x1="0" y1="0" x2="0" y2="1"><stop offset="0" stop-color="#8c97a4"/><stop offset=".7" stop-color="#a7b0ba"/><stop offset="1" stop-color="#cfd3d9"/></linearGradient></defs><g opacity=".9"><polygon points="7.8,13 39.3,25 38.7,67 14,59.7" fill="url(#bn1)"/><polygon points="39.3,25 64,15.5 57.7,61 38.7,67" fill="url(#bn2)"/><polygon points="7.8,13 33.7,4 64,15.5 39.3,25" fill="#7c8794"/><polygon points="10.5,13.2 33.7,5.5 61,15.6 39.3,23.5" fill="#8e99a6"/><path d="M7.8 13 L33.7 4 L64 15.5 L39.3 25 Z" fill="none" stroke="#d5dae0" stroke-width="1"/><path d="M39.3 25 L38.7 67" stroke="#c5cbd2" stroke-width=".8"/></g><g fill="none" stroke="#1d8fe6" stroke-width="3.6"><path d="M19 36 A8.5 9.5 0 0 1 31 31.5"/><path d="M33.5 38 A8.5 9.5 0 0 1 28 48.5"/><path d="M22 48 A8.5 9.5 0 0 1 17.5 41"/></g><g fill="#1d8fe6"><path d="M29 27.5 L35 33 L28 35 Z"/><path d="M31 51 L24 52 L27.5 45 Z"/><path d="M14.5 43 L17 36.5 L21.5 42 Z"/></g></svg>
<div class="lbl" style="left:-14px;top:377px">回收站</div>
<svg class="abs" style="left:132px;top:301px" width="72" height="72" viewBox="0 0 72 72"><defs><linearGradient id="ag" x1="0" y1="0" x2="0" y2="1"><stop offset="0" stop-color="#4a9a3a"/><stop offset=".5" stop-color="#8cc63f"/><stop offset="1" stop-color="#6fb23a"/></linearGradient><linearGradient id="ab" x1="0" y1="0" x2="0" y2="1"><stop offset="0" stop-color="#1b9ff0"/><stop offset="1" stop-color="#1a58a8"/></linearGradient><linearGradient id="at" x1="0" y1="0" x2="1" y2="0"><stop offset="0" stop-color="#27c0a0"/><stop offset="1" stop-color="#109080"/></linearGradient></defs><polygon points="22.7,3 31.5,19.5 19.5,49.6 1.2,49.6" fill="url(#ag)"/><polygon points="18.9,53.3 44.1,53.3 21.4,67.2 14,60" fill="url(#at)"/><polygon points="22.7,3 42.9,2.8 70.7,68.5 53,69.8" fill="url(#ab)"/><polygon points="22.7,3 31.5,19.5 36,10 30,2.9" fill="#2a86d8" opacity=".5"/><g transform="translate(0,52.5)"><rect x="0" y="0" width="19.5" height="19.5" fill="#f4f6fa"/><path d="M0.5 0.4 H19" stroke="#b9bcc2" stroke-width=".8"/><path d="M19.2 0 V19.5" stroke="#cfd3da" stroke-width=".6"/><path d="M4.9 2.6 L15.1 2.6 L15.1 12.9 L11.7 10.2 C9.5 11.8 8.3 13.7 8.5 17.3 C6 16.5 4.5 14 4.1 11 C4.3 8.5 5.8 6.5 7.8 5.3 Z" fill="#2b5dab"/><path d="M4.9 2.6 L15.1 2.6 L15.1 5 L7 4.6 Z" fill="#1d427e" opacity=".7"/></g></svg>
<div class="lbl" style="left:98px;top:377px"><span class="la">Autodesk</span> 桌<br>面应用程序</div>
<svg class="abs" style="left:244px;top:301px" width="72" height="72" viewBox="0 0 72 72"><path d="M12.9 4.5 H46.2 L59.7 17.7 V67.2 H12.9 Z" fill="#f9fafc"/><path d="M46.2 4.5 L59.7 17.7 H46.2 Z" fill="#d9dce0"/><path d="M46.2 17.7 H59.7" stroke="#c4c7cc" stroke-width=".8"/></svg>
<div class="lbl" style="left:210px;top:377px">三电各类传感<br>器.bak</div>
<svg class="abs" style="left:20px;top:448px" width="72" height="72" viewBox="0 0 72 72"><rect x="5.3" y="15.5" width="61.7" height="41.5" fill="#6ec6f6" stroke="#2b8ddc" stroke-width="1.6"/><rect x="7" y="17" width="58" height="18" fill="#8dd4fa" opacity=".5"/><circle cx="23.5" cy="32.5" r="10.7" fill="#3b9ae0" stroke="#cfeeff" stroke-width="1"/><path d="M24.5 31.5 V20.5 A11 11 0 0 1 35.5 31.5 Z" fill="#f7a512"/><path d="M36 30 H41 V23 H48" fill="none" stroke="#cfeeff" stroke-width="1"/><rect x="48" y="21" width="11.5" height="5" rx="2.5" fill="#d7effc"/><circle cx="57" cy="23.5" r="2.3" fill="#f59a20"/><rect x="48" y="30" width="11.5" height="4.5" rx="2.2" fill="#9fd8f8"/><circle cx="50.5" cy="32.2" r="2.2" fill="#2a6fa8"/><rect x="48" y="38.5" width="11.5" height="4.5" rx="2.2" fill="#9fd8f8"/><circle cx="50.5" cy="40.8" r="2.2" fill="#2a6fa8"/><rect x="13" y="49" width="20" height="2" fill="#f7a512"/><rect x="35" y="49" width="24" height="1.6" fill="#2a7fc8"/><circle cx="34" cy="50" r="1.6" fill="#2a7fc8"/></svg>
<div class="lbl" style="left:-14px;top:524px">控制面板</div>
<svg class="abs" style="left:132px;top:448px" width="72" height="72" viewBox="0 0 72 72"><rect x="0" y="0" width="72" height="45" fill="#1c1a45"/><rect x="0" y="0" width="19.5" height="45" fill="#2b2659"/><path d="M19.8 0 V44" stroke="#8a8a5a" stroke-width=".9"/><rect x="22" y="3.8" width="4" height="2.2" fill="#e6e6f0"/><rect x="27" y="3.8" width="6" height="2.2" fill="#e6e6f0"/><rect x="34" y="3.8" width="3" height="2.2" fill="#e6e6f0"/><rect x="43" y="3.8" width="5" height="2.2" fill="#e6e6f0"/><rect x="50" y="3.8" width="5" height="2.2" fill="#e6e6f0"/><rect x="61" y="3.8" width="4" height="2.2" fill="#e6e6f0"/><rect x="67" y="3.8" width="4" height="2.2" fill="#e6e6f0"/><rect x="33" y="10.6" width="2" height="1.4" fill="#e6e6f0"/><rect x="55" y="10.6" width="2" height="1.4" fill="#e6e6f0"/><rect x="22" y="18.3" width="12" height="2.2" fill="#e6e6f0"/><rect x="36" y="18.3" width="4" height="2.2" fill="#e6e6f0"/><rect x="43" y="18.3" width="3" height="2.2" fill="#e6e6f0"/><rect x="52" y="18.3" width="6" height="2.2" fill="#e6e6f0"/><rect x="62" y="18.3" width="3" height="2.2" fill="#e6e6f0"/><rect x="66" y="18.3" width="5" height="2.2" fill="#e6e6f0"/><rect x="30" y="25" width="3" height="2.2" fill="#e6e6f0"/><rect x="46" y="25" width="3" height="2.2" fill="#e6e6f0"/><rect x="70" y="25" width="1" height="1.4" fill="#e6e6f0"/><rect x="30" y="28.5" width="2" height="1.4" fill="#e6e6f0"/><rect x="22" y="32.6" width="3" height="2.2" fill="#e6e6f0"/><rect x="26" y="32.6" width="4" height="2.2" fill="#e6e6f0"/><rect x="33" y="32.6" width="2" height="1.4" fill="#e6e6f0"/><rect x="41" y="32.6" width="3" height="2.2" fill="#e6e6f0"/><rect x="46" y="32.6" width="2" height="1.4" fill="#e6e6f0"/><rect x="52" y="32.6" width="3" height="2.2" fill="#e6e6f0"/><rect x="57" y="32.6" width="2" height="1.4" fill="#e6e6f0"/><rect x="62" y="32.6" width="9" height="2.2" fill="#e6e6f0"/><rect x="0" y="46" width="72" height="26" fill="#fff"/><g transform="translate(49.5,48)"><path d="M0 0 H15 L21.5 6.5 V24 H0 Z" fill="#5c82ad"/><path d="M15 0 L21.5 6.5 H15 Z" fill="#3c5f8a"/><path d="M0 6 L21.5 13 V19 L0 11.5 Z" fill="#7f9dc0" opacity=".55"/><rect x="1.8" y="1.6" width="4.6" height="6" fill="none" stroke="#e8eef5" stroke-width="1"/><path d="M4 0.8 V9.5 M6.4 4 H13" stroke="#dbe4ee" stroke-width=".8"/><path d="M0 11.5 L5.3 9.8 L21.5 18.8 V24 H0 Z" fill="#f6c816"/><text x="0.6" y="22.6" font-family="Liberation Sans, sans-serif" font-weight="bold" font-size="6.6" fill="#2e2200" textLength="12.5" lengthAdjust="spacingAndGlyphs">DWG</text></g></svg>
<div class="lbl" style="left:98px;top:524px">2配电系统图<br><span class="la">(06~10)</span>&nbsp; <span class="el">...</span></div>
<svg class="abs" style="left:244px;top:448px" width="72" height="72" viewBox="0 0 72 72"><rect x="0" y="46" width="72" height="26" fill="#3c4048"/><path d="M23 54 H40 V70 H23 Z M23 60 H28 L31 57 H40 M29 63 H40 M42 58 H48 M42 62 H48" fill="none" stroke="#d9dde2" stroke-width="1"/><circle cx="17" cy="64" r="4.3" fill="none" stroke="#aab0b8" stroke-width="1"/><path d="M17 60 V64" stroke="#aab0b8" stroke-width="1"/><path d="M23 48.3 H44" stroke="#cfd3d8" stroke-width="1.4" stroke-dasharray="3 1"/><path d="M1.5 53 H6" stroke="#9aa0a8" stroke-width="1.2"/><rect x="42" y="64" width="5" height="5" fill="#3a7ad0"/><g transform="translate(49.5,47.6)"><path d="M0 0 H15 L21.5 6.5 V24 H0 Z" fill="#5c82ad"/><path d="M15 0 L21.5 6.5 H15 Z" fill="#3c5f8a"/><path d="M0 6 L21.5 13 V19 L0 11.5 Z" fill="#7f9dc0" opacity=".55"/><rect x="1.8" y="1.6" width="4.6" height="6" fill="none" stroke="#e8eef5" stroke-width="1"/><path d="M4 0.8 V9.5 M6.4 4 H13" stroke="#dbe4ee" stroke-width=".8"/><path d="M0 11.5 L5.3 9.8 L21.5 18.8 V24 H0 Z" fill="#f6c816"/><text x="0.6" y="22.6" font-family="Liberation Sans, sans-serif" font-weight="bold" font-size="6.6" fill="#2e2200" textLength="12.5" lengthAdjust="spacingAndGlyphs">DWG</text></g></svg>
<div class="lbl" style="left:210px;top:524px">三电各类传感<br>器</div>
<svg class="abs" style="left:20px;top:595px" width="72" height="72" viewBox="0 0 72 72"><defs><linearGradient id="acbg0" x1="0" y1="0" x2="1" y2="1"><stop offset="0" stop-color="#f7e4dc"/><stop offset=".5" stop-color="#fbf1ed"/><stop offset="1" stop-color="#f6e6e0"/></linearGradient><linearGradient id="acr0" x1="0" y1="0" x2="1" y2="1"><stop offset="0" stop-color="#d4242c"/><stop offset=".6" stop-color="#c01c24"/><stop offset="1" stop-color="#9a1219"/></linearGradient></defs><rect x="0" y="0" width="72" height="72" fill="url(#acbg0)"/><path fill-rule="evenodd" d="M33.7 7.9 H42.5 L60.8 58.4 L48.8 59.7 L44.5 47 L28.5 49.5 L26.7 59.7 L15.4 53.3 Z M37.8 19.5 L32 35 L42.6 33 Z" fill="url(#acr0)"/><path d="M15.4 53.3 L26.7 59.7 L28.5 49.5 L23 45 Z" fill="#8a1016" opacity=".6"/><path d="M48.8 59.7 L60.8 58.4 L57.5 49 L46 51 Z" fill="#8a1016" opacity=".5"/><path d="M24.5 38 L51.6 33.5 L53.5 39 L23 45.5 Z" fill="#e23c3c" opacity=".5"/><g transform="translate(0,52.5)"><rect x="0" y="0" width="19.5" height="19.5" fill="#f4f6fa"/><path d="M0.5 0.4 H19" stroke="#b9bcc2" stroke-width=".8"/><path d="M19.2 0 V19.5" stroke="#cfd3da" stroke-width=".6"/><path d="M4.9 2.6 L15.1 2.6 L15.1 12.9 L11.7 10.2 C9.5 11.8 8.3 13.7 8.5 17.3 C6 16.5 4.5 14 4.1 11 C4.3 8.5 5.8 6.5 7.8 5.3 Z" fill="#2b5dab"/><path d="M4.9 2.6 L15.1 2.6 L15.1 5 L7 4.6 Z" fill="#1d427e" opacity=".7"/></g></svg>
<div class="lbl" style="left:-14px;top:671px"><span class="la">AutoCAD</span><br><span style="letter-spacing:.5px">2019 - 简</span><span class="el">...</span></div>
<svg class="abs" style="left:132px;top:595px" width="72" height="72" viewBox="0 0 72 72"><rect x="0" y="0" width="72" height="45.3" fill="#231a47"/><path d="M8.5 13.5 H50.5 V32 H8.5 Z M8.5 35 H50.5 V46" fill="none" stroke="#a2307c" stroke-width="1"/><path d="M8.5 35 V46" stroke="#a2307c" stroke-width="1"/><rect x="10.5" y="17" width="10.5" height="12" fill="#22c83a"/><path d="M10.5 21 H21.0 M10.5 25 H21.0 M14.0 17 V29 M17.5 17 V29" stroke="#d8ffd8" stroke-width=".7"/><rect x="10.5" y="38" width="10.8" height="8" fill="#16e02a"/><rect x="24" y="17" width="10.5" height="12" fill="#22c83a"/><path d="M24 21 H34.5 M24 25 H34.5 M27.5 17 V29 M31 17 V29" stroke="#d8ffd8" stroke-width=".7"/><rect x="24" y="38" width="10.8" height="8" fill="#16e02a"/><rect x="37" y="17" width="10.5" height="12" fill="#22c83a"/><path d="M37 21 H47.5 M37 25 H47.5 M40.5 17 V29 M44 17 V29" stroke="#d8ffd8" stroke-width=".7"/><rect x="37" y="38" width="10.8" height="8" fill="#16e02a"/><rect x="0" y="45.3" width="72" height="26.700000000000003" fill="#fff"/><g transform="translate(49.5,48)"><path d="M0 0 H15 L21.5 6.5 V24 H0 Z" fill="#5c82ad"/><path d="M15 0 L21.5 6.5 H15 Z" fill="#3c5f8a"/><path d="M0 6 L21.5 13 V19 L0 11.5 Z" fill="#7f9dc0" opacity=".55"/><rect x="1.8" y="1.6" width="4.6" height="6" fill="none" stroke="#e8eef5" stroke-width="1"/><path d="M4 0.8 V9.5 M6.4 4 H13" stroke="#dbe4ee" stroke-width=".8"/><path d="M0 11.5 L5.3 9.8 L21.5 18.8 V24 H0 Z" fill="#f6c816"/><text x="0.6" y="22.6" font-family="Liberation Sans, sans-serif" font-weight="bold" font-size="6.6" fill="#2e2200" textLength="12.5" lengthAdjust="spacingAndGlyphs">DWG</text></g></svg>
<div class="lbl" style="left:98px;top:671px">5照明插座防<br>雷接地(18<span class="el">...</span></div>
<svg class="abs" style="left:20px;top:742px" width="72" height="72" viewBox="0 0 72 72"><defs><linearGradient id="acbg1" x1="0" y1="0" x2="1" y2="1"><stop offset="0" stop-color="#f7e4dc"/><stop offset=".5" stop-color="#fbf1ed"/><stop offset="1" stop-color="#f6e6e0"/></linearGradient><linearGradient id="acr1" x1="0" y1="0" x2="1" y2="1"><stop offset="0" stop-color="#d4242c"/><stop offset=".6" stop-color="#c01c24"/><stop offset="1" stop-color="#9a1219"/></linearGradient></defs><rect x="0" y="0" width="72" height="72" fill="url(#acbg1)"/><path fill-rule="evenodd" d="M32.5 7.9 H41 L58 51.5 L47 53 L43 42 L28 44.5 L26 53 L15.6 48 Z M36.6 18.5 L31.3 32 L41 30.3 Z" fill="url(#acr1)"/><path d="M15.6 48 L26 53 L28 44.5 L22.5 40 Z" fill="#8a1016" opacity=".6"/><path d="M47 53 L58 51.5 L55 43.5 L44.5 45.5 Z" fill="#8a1016" opacity=".5"/><path d="M23 37 L50 32.5 L51.5 37 L24.5 42.5 Z" fill="#e03a3a" opacity=".45"/><text x="55" y="67" font-family="Liberation Sans, sans-serif" font-weight="bold" font-size="11.5" fill="#c8202a">E</text><g transform="translate(0,52.5)"><rect x="0" y="0" width="19.5" height="19.5" fill="#f4f6fa"/><path d="M0.5 0.4 H19" stroke="#b9bcc2" stroke-width=".8"/><path d="M19.2 0 V19.5" stroke="#cfd3da" stroke-width=".6"/><path d="M4.9 2.6 L15.1 2.6 L15.1 12.9 L11.7 10.2 C9.5 11.8 8.3 13.7 8.5 17.3 C6 16.5 4.5 14 4.1 11 C4.3 8.5 5.8 6.5 7.8 5.3 Z" fill="#2b5dab"/><path d="M4.9 2.6 L15.1 2.6 L15.1 5 L7 4.6 Z" fill="#1d427e" opacity=".7"/></g></svg>
<div class="lbl" style="left:-14px;top:818px"><span class="la">AutoCAD</span><br><span style="letter-spacing:.25px">Electrical </span><span class="el">...</span></div>
<svg class="abs" style="left:132px;top:742px" width="72" height="72" viewBox="0 0 72 72"><rect x="0" y="0" width="72" height="45.3" fill="#28224f"/><rect x="16" y="4" width="33" height="25" fill="#15132e"/><rect x="16.5" y="5" width="1.2" height="23" fill="#d8d8e8"/><rect x="19.5" y="5" width="1.8" height="23" fill="#b8b8cc"/><rect x="23" y="5" width="1.2" height="23" fill="#d8d8e8"/><rect x="26" y="5" width="4" height="23" fill="#0a0a16"/><rect x="31.5" y="5" width="1.5" height="23" fill="#0a0a16"/><rect x="44" y="5" width="1" height="23" fill="#8888a0"/><path d="M33.8 4 V29" stroke="#c8d020" stroke-width="1.1"/><path d="M18 25.2 H47" stroke="#d8d020" stroke-width="1.3"/><path d="M17 28.5 H49" stroke="#d8d8e8" stroke-width="1" stroke-dasharray="3 2"/><path d="M30.5 2 H49" stroke="#e0202a" stroke-width="2" stroke-dasharray="2.5 1"/><path d="M1 2 H6.5" stroke="#e8e8f0" stroke-width="2"/><path d="M2 7 H4.5 M2 11 H4.5 M2 15 H4.5 M2 19 H4.5 M2 24 H4.5 M5 27 V22" stroke="#6a6890" stroke-width="1.2"/><rect x="0" y="45.3" width="72" height="26.700000000000003" fill="#fff"/><g transform="translate(49.5,48)"><path d="M0 0 H15 L21.5 6.5 V24 H0 Z" fill="#5c82ad"/><path d="M15 0 L21.5 6.5 H15 Z" fill="#3c5f8a"/><path d="M0 6 L21.5 13 V19 L0 11.5 Z" fill="#7f9dc0" opacity=".55"/><rect x="1.8" y="1.6" width="4.6" height="6" fill="none" stroke="#e8eef5" stroke-width="1"/><path d="M4 0.8 V9.5 M6.4 4 H13" stroke="#dbe4ee" stroke-width=".8"/><path d="M0 11.5 L5.3 9.8 L21.5 18.8 V24 H0 Z" fill="#f6c816"/><text x="0.6" y="22.6" font-family="Liberation Sans, sans-serif" font-weight="bold" font-size="6.6" fill="#2e2200" textLength="12.5" lengthAdjust="spacingAndGlyphs">DWG</text></g></svg>
<div class="lbl" style="left:98px;top:818px">三电车间工<br>艺、设备平<span class="el">...</span></div>
<!--/ICONS-->
</div>
</div>
</body>
</html>
